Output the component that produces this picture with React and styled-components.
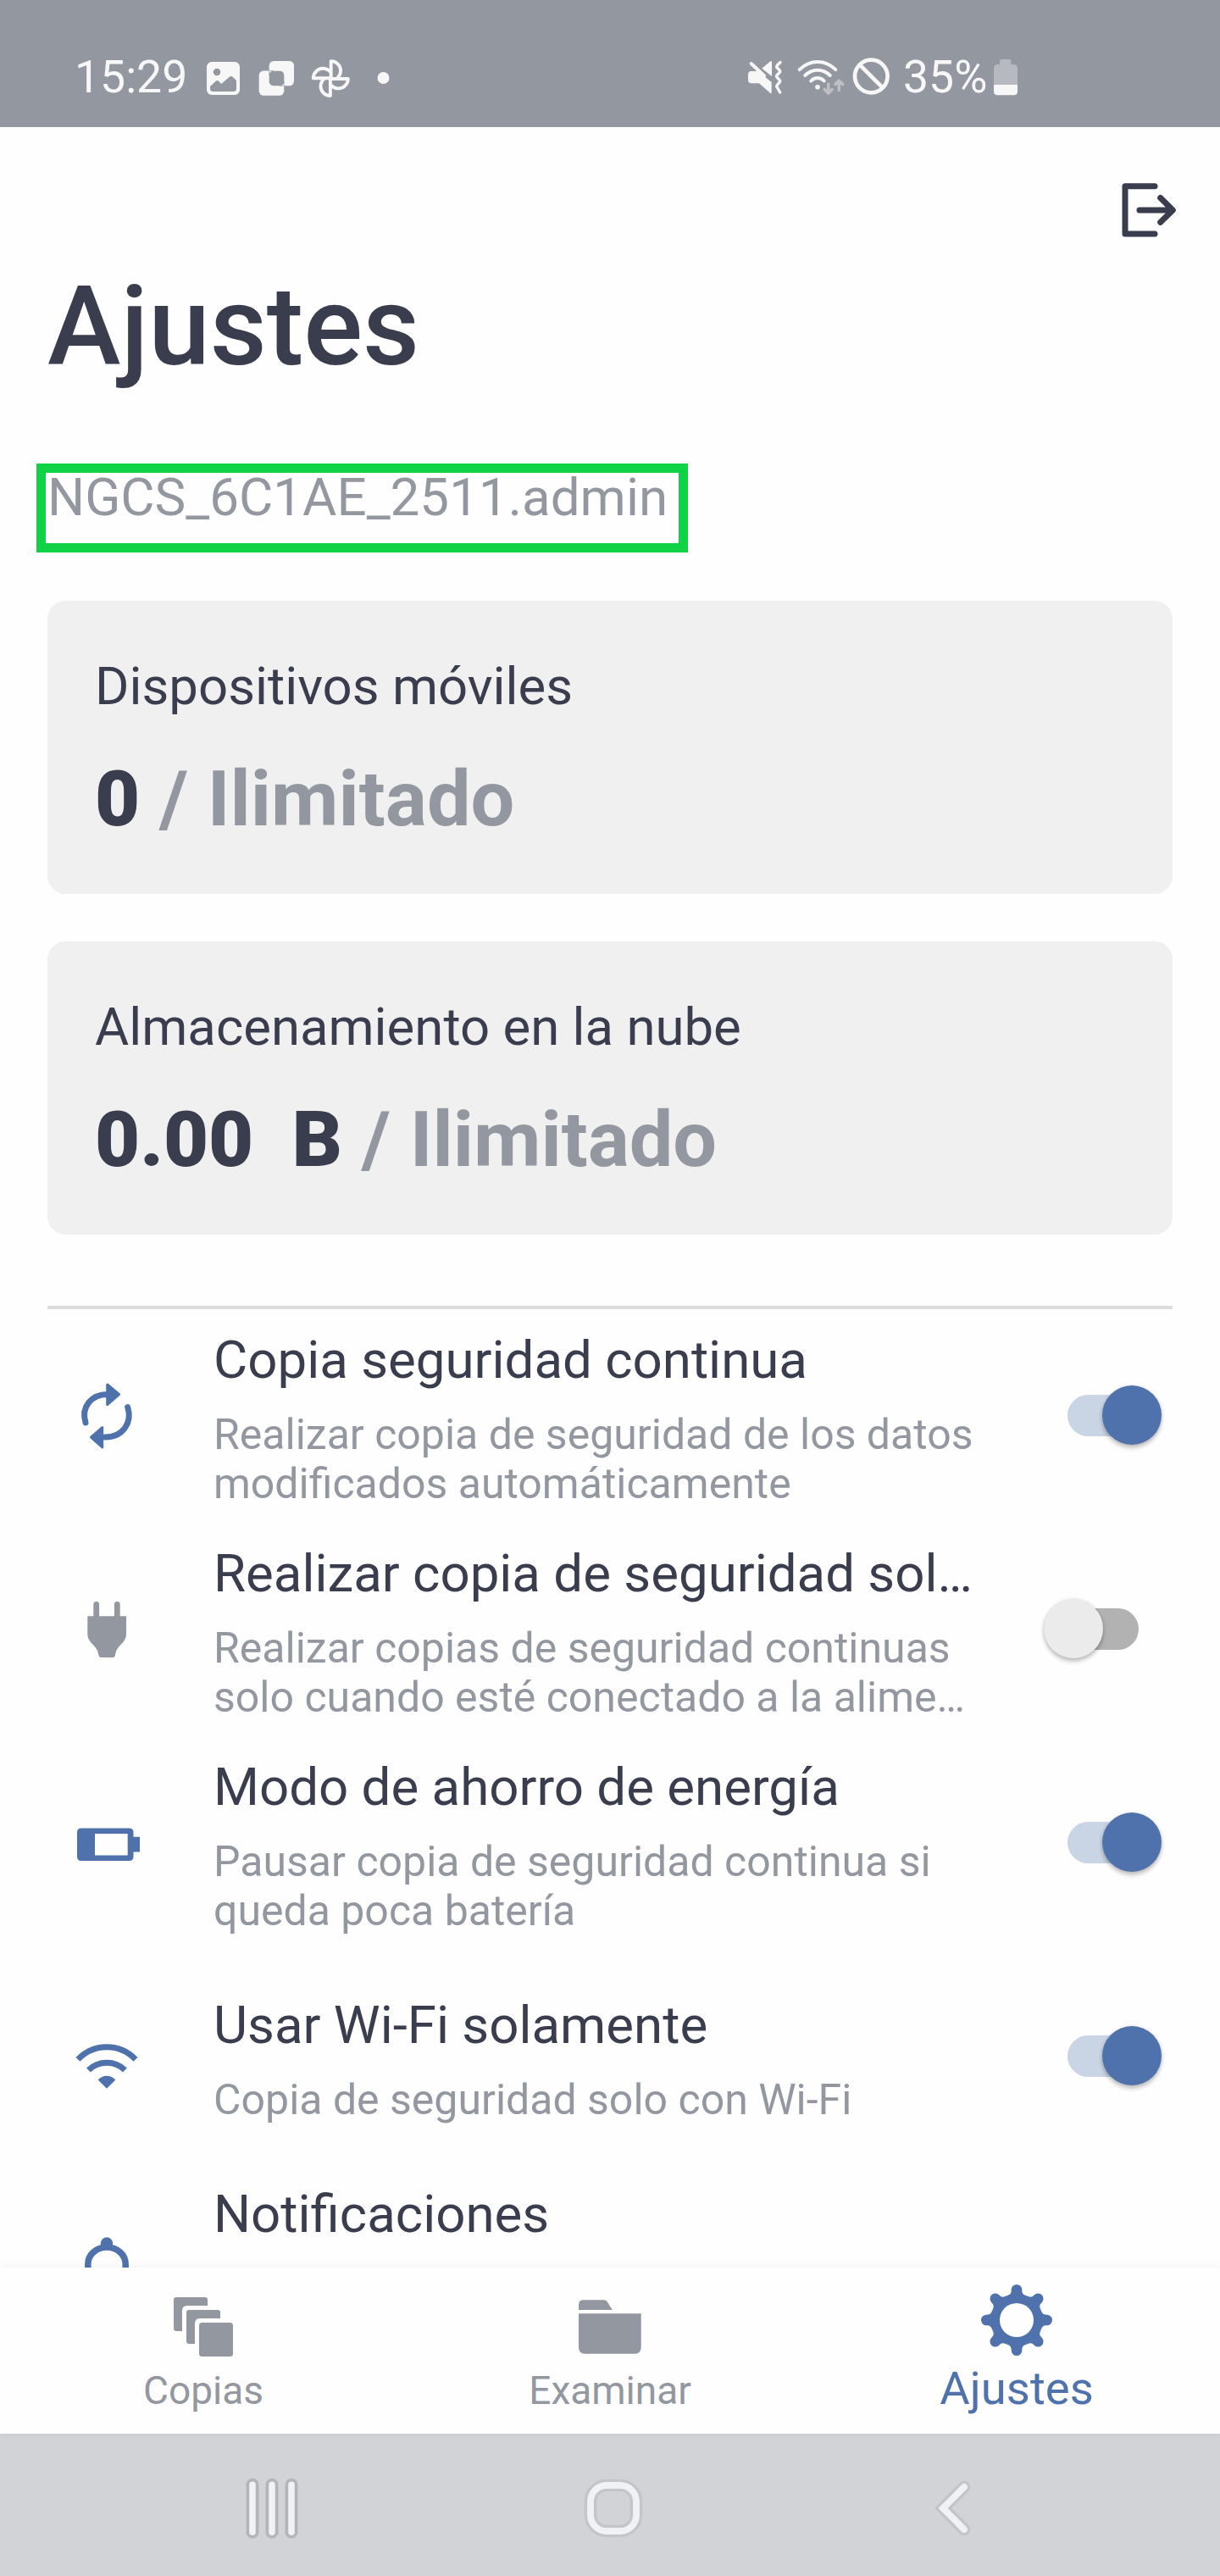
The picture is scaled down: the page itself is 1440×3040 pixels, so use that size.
import styled, { createGlobalStyle } from "styled-components";

const colors = {
    dark: "#393d4d",
    gray: "#9397a0",
    blue: "#5072ac",
    white: "#f7f7f8"
};

const GlobalStyle = createGlobalStyle`
    * {
        box-sizing: border-box;
    }

    body {
        margin: 0;
        font-family: Roboto, "Liberation Sans", sans-serif;
        color: ${ colors.dark };
        background-color: #fefefe;
    }

    svg {
        display: block;
        flex-shrink: 0;
    }
`;

const Screen = styled.div`
    width: 1440px;
    height: 3040px;
    display: flex;
    flex-direction: column;
    overflow: hidden;
`;

const StatusBar = styled.div`
    height: 150px;
    padding: 67px 236px 0 88px;
    display: flex;
    justify-content: space-between;
    background-color: ${ colors.gray };
    color: ${ colors.white };
    flex-shrink: 0;
`;

const StatusGroup = styled.div`
    display: flex;
    gap: ${ props => props.$gap || 0 }px;
`;

const StatusText = styled.span`
    width: ${ props => props.$width }px;
    font-size: 53.5px;
    line-height: 48px;
    white-space: nowrap;
`;

const Content = styled.main`
    flex: 1;
    min-height: 0;
    overflow: hidden;
    padding: 0 56px;
`;

const Toolbar = styled.div`
    height: 158px;
    padding-top: 56px;
    margin-right: -14px;
    display: flex;
    justify-content: flex-end;
`;

const Title = styled.h1`
    margin: 0 0 83px;
    font-size: 130.4px;
    line-height: 156px;
    font-weight: 500;
`;

const UserName = styled.div`
    width: 769px;
    height: 105px;
    margin: 0 0 57px -13px;
    padding-left: 2px;
    border: 11px solid #0fd345;
    font-size: 61.9px;
    line-height: 58px;
    color: ${ colors.gray };
    white-space: nowrap;
`;

const Card = styled.section`
    height: 346px;
    padding: 64px 56px 0;
    margin-bottom: 56px;
    border-radius: 21px;
    background-color: #f0f0f0;
`;

const CardLabel = styled.div`
    font-size: 61.7px;
    line-height: 75px;
`;

const CardValue = styled.div`
    margin-top: 41px;
    font-size: 91.7px;
    line-height: 108px;
    font-weight: 700;
    color: ${ colors.gray };
    white-space: pre;

    strong {
        color: ${ colors.dark };
    }
`;

const Divider = styled.div`
    height: 4px;
    margin: 84px 0 -1px;
    background-color: #dadcde;
`;

const SettingRow = styled.div`
    height: 252px;
    display: flex;
    align-items: center;
    padding-left: 28px;
    color: ${ props => props.$disabled ? colors.gray : colors.blue };
`;

const SettingText = styled.div`
    flex: 1;
    padding-top: 8px;
    margin-left: 84px;
`;

const SettingTitle = styled.div`
    font-size: 61.8px;
    line-height: 75px;
    color: ${ colors.dark };
    white-space: nowrap;
`;

const SettingDescription = styled.div`
    min-height: ${ props => props.$lines * 58 }px;
    margin-top: 20.7px;
    font-size: 50px;
    line-height: 58px;
    color: ${ colors.gray };
    white-space: pre-line;
`;

const SwitchTrack = styled.div`
    width: 84px;
    height: 49px;
    margin-right: 40px;
    display: flex;
    align-items: center;
    border-radius: 25px;
    background-color: ${ props => props.$on ? "#c9d5e5" : "#b2b2b2" };
`;

const SwitchThumb = styled.div`
    width: 70px;
    height: 70px;
    flex-shrink: 0;
    margin-left: ${ props => props.$on ? 41 : -28 }px;
    border-radius: 50%;
    background-color: ${ props => props.$on ? colors.blue : "#ebebeb" };
    box-shadow: 0 4px 5px rgba(0, 0, 0, .22), 0 0 4px rgba(0, 0, 0, .12);
`;

const TabBar = styled.nav`
    position: relative;
    height: 196px;
    flex-shrink: 0;
    display: grid;
    grid-template-columns: repeat(3, 1fr);
    background-color: #fefefe;
    box-shadow: 0 -1px 10px rgba(0, 0, 0, .06);
`;

const Tab = styled.div`
    display: flex;
    flex-direction: column;
    align-items: center;
    padding-top: 16px;
    color: ${ props => props.$active ? colors.blue : colors.gray };
`;

const TabLabel = styled.span`
    margin-top: ${ props => props.$active ? 2 : 3 }px;
    font-size: ${ props => props.$active ? 54.5 : 46 }px;
    line-height: ${ props => props.$active ? 64 : 69 }px;
`;

const SystemBar = styled.div`
    height: 168px;
    flex-shrink: 0;
    display: flex;
    justify-content: space-between;
    align-items: center;
    padding: 8px 274px 0 281px;
    background-color: #d2d3d7;
`;

function ImageIcon() {
    return (
        <svg width="46" height="50" viewBox="0 0 46 50">
            <rect x="3" y="6" width="39" height="39" rx="6" fill={ colors.white } />
            <circle cx="15" cy="18" r="4.3" fill={ colors.gray } />
            <path d="M7 36.5V35l6.8-6.3q1.7-1.4 3.3.1l3.2 3.2 9.4-8.2q2-1.6 4 0l4.3 4.2V37.5q0 3.5-3.5 3.5H10.5q-3.5 0-3.5-3.5z" fill={ colors.gray } />
        </svg>
    )
}

function OverlapIcon() {
    return (
        <svg width="46" height="50" viewBox="0 0 46 50">
            <rect x="13.7" y="5" width="29.3" height="29.3" rx="5.5" fill={ colors.white } />
            <rect x="1.7" y="16.5" width="29.6" height="29.3" rx="5.5" fill={ colors.white } />
            <rect x="13.7" y="16.7" width="17.6" height="17.6" rx="5" fill={ colors.gray } />
            <path d="M19 16.5H13.7V22M26 34.3h5.3V29" fill="none" stroke={ colors.gray } strokeWidth=".7" />
        </svg>
    )
}

function PinwheelIcon() {
    return (
        <svg width="46" height="50" viewBox="0 0 46 50" fill="none" stroke={ colors.white } strokeWidth="3.9" strokeLinejoin="round">
            {
                [0, 90, 180, 270].map(angle => (
                    <path key={ angle } transform={ `translate(23.3 25.6) rotate(${ angle })` } d="M.4 0V-20.5C7-20.5 11.8-15 11.8-9.5C11.8-5.5 10.300-2.500 7.500 0" />
                ))
            }
        </svg>
    )
}

function MuteIcon() {
    return (
        <svg width="60" height="50" viewBox="0 0 60 50" fill={ colors.white }>
            <path d="M7 17h7.5L30.7 30V42q0 2-1.7.7L16 31.3H7q-4 0-4-4V21q0-4 4-4z" />
            <path d="M19.3 13.7L29 5.6q2-1.4 2 .8V23z" />
            <path d="M6.7 8L22 22.5" stroke={ colors.white } strokeWidth="4" strokeLinecap="round" />
            <path d="M41 6.5L37.5 10Q36 11.8 37.5 13.3L39.8 15.5Q41.5 17.3 39.8 19L37.5 21.3Q35.8 23 37.5 24.7L39.8 27Q41.5 29 39.8 30.5L37.5 33Q36 34.8 37.5 36.5L40.7 42" fill="none" stroke={ colors.white } strokeWidth="3.4" strokeLinecap="round" />
        </svg>
    )
}

function WifiStatusIcon() {
    return (
        <svg width="64" height="50" viewBox="0 0 64 50" fill="none" strokeWidth="4" strokeLinecap="round" strokeLinejoin="round">
            <g stroke={ colors.white }>
                <path d="M3.7 15.2Q13 6 25 6T46.3 15.2" />
                <path d="M10.3 22Q16.5 15.7 25 15.7T39.7 22" />
                <path d="M17.3 28.5Q20.5 25 25 25T32.7 28.5" />
            </g>
            <circle cx="25" cy="35.7" r="2.8" fill={ colors.white } />
            <path d="M37.7 32V43M33.3 38.5l4.4 4.5 4.4-4.5M50.3 39.5V28.5M46 32.5l4.3-4.3 4.4 4.3" stroke="#bdbfc3" strokeWidth="3.6" />
        </svg>
    )
}

function BlockIcon() {
    return (
        <svg width="62" height="50" viewBox="0 0 62 50" fill="none" stroke={ colors.white } strokeWidth="4.7">
            <circle cx="24.3" cy="23" r="19.3" />
            <path d="M10.7 9.4l27.2 27.2" />
        </svg>
    )
}

function BatteryStatusIcon() {
    return (
        <svg width="34" height="50" viewBox="0 0 34 50">
            <path d="M10 9V5.5q0-2.5 2.5-2.5h8.3q2.5 0 2.5 2.5V9H26q5 0 5 5v27q0 4.7-4.7 4.7H7.7Q3 45.7 3 41V14q0-5 5-5z" fill="#b6b9c0" />
            <path d="M3 33h28v8q0 4-4.5 4H7.5Q3 45 3 41z" fill={ colors.white } />
        </svg>
    )
}

function LogoutIcon() {
    return (
        <svg width="84" height="84" viewBox="0 0 84 84" fill="none" stroke={ colors.dark } strokeWidth="7" strokeLinecap="round" strokeLinejoin="round">
            <path d="M49 13.7H14V70H49M31 42H70M55.7 27.5L70.3 42L55.7 56.3" />
        </svg>
    )
}

function SyncIcon() {
    return (
        <svg width="84" height="84" viewBox="0 0 84 84" fill="currentColor" stroke="currentColor" strokeLinecap="round" strokeLinejoin="round">
            <path d="M17 51C11.5 33 23 17.5 43 17.5M66.7 32.7C72.5 51 61 68 40 68" fill="none" strokeWidth="7" />
            <path d="M42.7 6L56.5 17.5L42.7 29.5zM36.7 56.5V80L23.5 68.2z" strokeWidth="3" />
        </svg>
    )
}

function PlugIcon() {
    return (
        <svg width="84" height="84" viewBox="0 0 84 84" fill="currentColor">
            <path d="M29.7 13.5V30M54.3 13.5V30" stroke="currentColor" strokeWidth="6.8" strokeLinecap="round" />
            <path d="M19.3 27.3H65V48C65 60 53.5 60.5 52 73.5Q51.5 76 49 76H35.5Q33 76 32.5 73.5C31 60.5 19.3 60 19.3 48z" />
        </svg>
    )
}

function BatteryIcon() {
    return (
        <svg width="84" height="84" viewBox="0 0 84 84" fill="currentColor">
            <path fillRule="evenodd" d="M12 25.6H68.5Q73.5 25.6 73.5 30.6V35.8H81V53.5H73.5V59Q73.5 64 68.5 64H12Q7 64 7 59V30.6Q7 25.6 12 25.6zM28 32V57.5H66.7V32z" />
        </svg>
    )
}

function WifiIcon() {
    return (
        <svg width="84" height="84" viewBox="0 0 84 84" fill="none" stroke="currentColor" strokeWidth="7">
            <path d="M8 46.4A46.7 46.7 0 0 1 76 46.4M20.5 59A31 31 0 0 1 63.5 59" />
            <path d="M31.7 70.5Q36 65.8 42 65.8T52.3 70.5L42 80.8z" fill="currentColor" stroke="none" />
        </svg>
    )
}

function BellIcon() {
    return (
        <svg width="84" height="84" viewBox="0 0 84 84" fill="none" stroke="currentColor" strokeWidth="7.5">
            <circle cx="42" cy="11.5" r="7.2" fill="currentColor" stroke="none" />
            <path d="M19.8 62V36C19.8 25 29.5 16 42 16S64.2 25 64.2 36V62z" />
        </svg>
    )
}

function CopiesIcon() {
    return (
        <svg width="92" height="92" viewBox="0 0 92 92" fill="currentColor">
            <path d="M14 19H48q3 0 3 3v7H27q-6 0-6 6V59H14q-3 0-3-3V22q0-3 3-3z" />
            <path d="M29 34H63q3 0 3 3v7H42q-6 0-6 6V74H29q-3 0-3-3V37q0-3 3-3z" />
            <rect x="41" y="49" width="40" height="40" rx="3.5" />
        </svg>
    )
}

function FolderIcon() {
    return (
        <svg width="92" height="92" viewBox="0 0 92 92" fill="currentColor">
            <path d="M9 34V28q0-5.7 5.7-5.7H39q2.5 0 3.5 1.7l6.3 10z" />
            <path d="M9 38.3H82.7V78q0 7.7-7.7 7.7H16.7Q9 85.7 9 78z" />
        </svg>
    )
}

function GearIcon() {
    const tooth = "M0 0L-11.9-28.6C-7.7-30.2-6.3-31-6.3-35.7A6.3 6.3 0 0 1 6.3-35.7C6.3-31 7.7-30.2 11.9-28.6z";

    return (
        <svg width="92" height="92" viewBox="0 0 92 92" fill="currentColor">
            <circle cx="46" cy="46" r="29" />
            {
                [0, 45, 90, 135, 180, 225, 270, 315].map(angle => (
                    <path key={ angle } d={ tooth } transform={ `translate(46 46) rotate(${ angle })` } />
                ))
            }
            <circle cx="46" cy="46" r="20" fill="#fefefe" />
        </svg>
    )
}

function RecentsIcon() {
    const bars = "M17 12.2V68.2M40 12.2V68.2M63 12.2V68.2";

    return (
        <svg width="80" height="80" viewBox="0 0 80 80" strokeLinecap="round">
            <path d={ bars } stroke="#b4b5b8" strokeWidth="15" />
            <path d={ bars } stroke="#f1f2f6" strokeWidth="7.5" />
        </svg>
    )
}

function HomeIcon() {
    return (
        <svg width="80" height="80" viewBox="0 0 80 80" fill="none">
            <rect x="13" y="13" width="54" height="54" rx="19" stroke="#c4c5c9" strokeWidth="14.5" />
            <rect x="13" y="13" width="54" height="54" rx="19" stroke="#f1f2f6" strokeWidth="7.8" />
        </svg>
    )
}

function BackIcon() {
    return (
        <svg width="80" height="80" viewBox="0 0 80 80" fill="none" strokeLinecap="round">
            <path d="M52 15L27 40L52 65" stroke="#c4c5c9" strokeWidth="14.5" />
            <path d="M52 15L27 40L52 65" stroke="#f1f2f6" strokeWidth="7.8" />
        </svg>
    )
}

function Switch({ on }) {
    return (
        <SwitchTrack $on={ on }>
            <SwitchThumb $on={ on } />
        </SwitchTrack>
    )
}

const settings = [
    {
        icon: SyncIcon,
        title: "Copia seguridad continua",
        description: "Realizar copia de seguridad de los datos\nmodificados automáticamente",
        lines: 2,
        on: true
    },
    {
        icon: PlugIcon,
        title: "Realizar copia de seguridad sol…",
        description: "Realizar copias de seguridad continuas\nsolo cuando esté conectado a la alime…",
        lines: 2,
        on: false
    },
    {
        icon: BatteryIcon,
        title: "Modo de ahorro de energía",
        description: "Pausar copia de seguridad continua si\nqueda poca batería",
        lines: 2,
        on: true
    },
    {
        icon: WifiIcon,
        title: "Usar Wi-Fi solamente",
        description: "Copia de seguridad solo con Wi-Fi",
        lines: 1,
        on: true
    },
    {
        icon: BellIcon,
        title: "Notificaciones",
        lines: 2
    }
];

const tabs = [
    { icon: CopiesIcon, label: "Copias" },
    { icon: FolderIcon, label: "Examinar" },
    { icon: GearIcon, label: "Ajustes", active: true }
];

export default function App() {
    return (
        <Screen>
            <GlobalStyle />

            <StatusBar>
                <StatusGroup $gap={ 17 }>
                    <StatusText $width={ 136 }>15:29</StatusText>
                    <ImageIcon />
                    <OverlapIcon />
                    <PinwheelIcon />
                    <svg width="46" height="50" viewBox="0 0 46 50">
                        <circle cx="22.5" cy="25" r="7" fill={ colors.white } />
                    </svg>
                </StatusGroup>

                <StatusGroup>
                    <MuteIcon />
                    <WifiStatusIcon />
                    <BlockIcon />
                    <StatusText $width={ 104 }>35%</StatusText>
                    <BatteryStatusIcon />
                </StatusGroup>
            </StatusBar>

            <Content>
                <Toolbar>
                    <LogoutIcon />
                </Toolbar>

                <Title>Ajustes</Title>
                <UserName>NGCS_6C1AE_2511.admin</UserName>

                <Card>
                    <CardLabel>Dispositivos móviles</CardLabel>
                    <CardValue><strong>0</strong> / Ilimitado</CardValue>
                </Card>
                <Card>
                    <CardLabel>Almacenamiento en la nube</CardLabel>
                    <CardValue><strong>0.00  B</strong> / Ilimitado</CardValue>
                </Card>

                <Divider />

                {
                    settings.map(({ icon: Icon, title, description, lines, on }) => (
                        <SettingRow key={ title } $disabled={ on === false }>
                            <Icon />
                            <SettingText>
                                <SettingTitle>{ title }</SettingTitle>
                                <SettingDescription $lines={ lines }>{ description }</SettingDescription>
                            </SettingText>
                            { on !== undefined && <Switch on={ on } /> }
                        </SettingRow>
                    ))
                }
            </Content>

            <TabBar>
                {
                    tabs.map(({ icon: Icon, label, active }) => (
                        <Tab key={ label } $active={ active }>
                            <Icon />
                            <TabLabel $active={ active }>{ label }</TabLabel>
                        </Tab>
                    ))
                }
            </TabBar>

            <SystemBar>
                <RecentsIcon />
                <HomeIcon />
                <BackIcon />
            </SystemBar>
        </Screen>
    )
}
